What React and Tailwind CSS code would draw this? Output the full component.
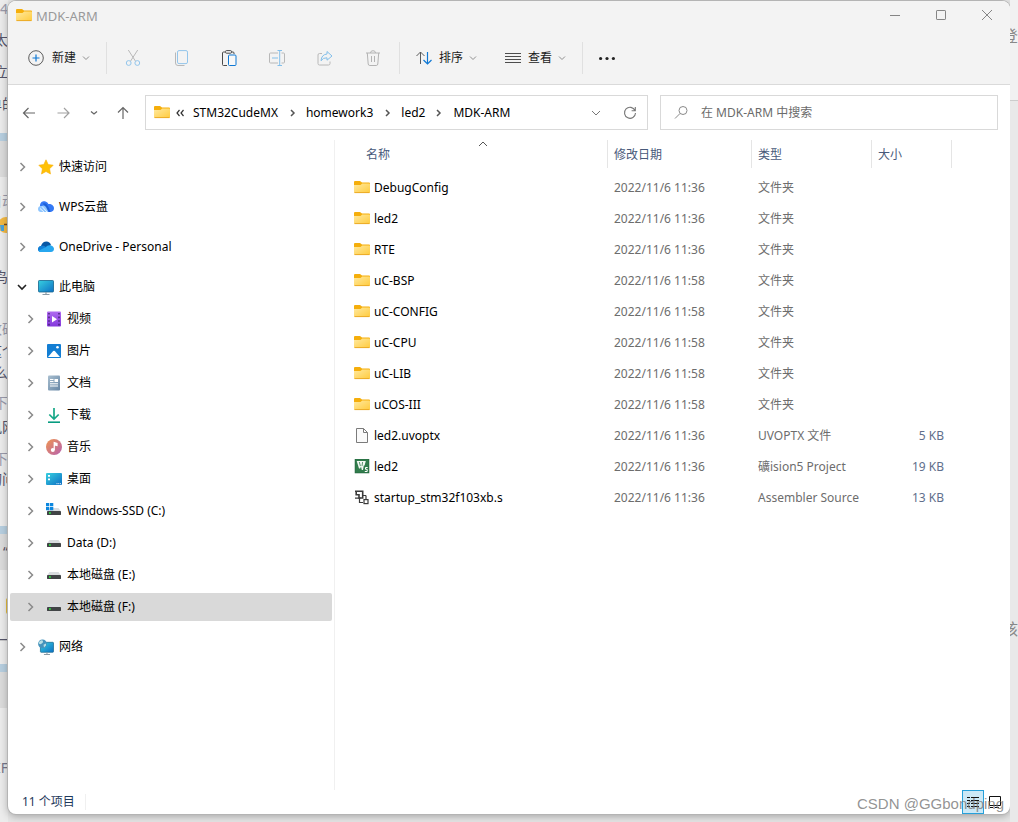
import { useState } from "react";

const places = [
  { name: "快速访问", icon: "star" },
  { name: "WPS云盘", icon: "wps" },
  { name: "OneDrive - Personal", icon: "onedrive" },
  {
    name: "此电脑",
    icon: "pc",
    children: [
      { name: "视频", icon: "video" },
      { name: "图片", icon: "picture" },
      { name: "文档", icon: "document" },
      { name: "下载", icon: "download" },
      { name: "音乐", icon: "music" },
      { name: "桌面", icon: "desktop" },
      { name: "Windows-SSD (C:)", icon: "system" },
      { name: "Data (D:)", icon: "drive" },
      { name: "本地磁盘 (E:)", icon: "drive" },
      { name: "本地磁盘 (F:)", icon: "drive" },
    ],
  },
  { name: "网络", icon: "network" },
];

const files = [
  { name: "DebugConfig", date: "2022/11/6 11:36", type: "文件夹", icon: "folder" },
  { name: "led2", date: "2022/11/6 11:36", type: "文件夹", icon: "folder" },
  { name: "RTE", date: "2022/11/6 11:36", type: "文件夹", icon: "folder" },
  { name: "uC-BSP", date: "2022/11/6 11:58", type: "文件夹", icon: "folder" },
  { name: "uC-CONFIG", date: "2022/11/6 11:58", type: "文件夹", icon: "folder" },
  { name: "uC-CPU", date: "2022/11/6 11:58", type: "文件夹", icon: "folder" },
  { name: "uC-LIB", date: "2022/11/6 11:58", type: "文件夹", icon: "folder" },
  { name: "uCOS-III", date: "2022/11/6 11:58", type: "文件夹", icon: "folder" },
  { name: "led2.uvoptx", date: "2022/11/6 11:36", type: "UVOPTX 文件", size: "5 KB", icon: "file" },
  { name: "led2", date: "2022/11/6 11:36", type: "礦ision5 Project", size: "19 KB", icon: "keil" },
  { name: "startup_stm32f103xb.s", date: "2022/11/6 11:36", type: "Assembler Source", size: "13 KB", icon: "asm" },
];

// Slivers of the web page that show left of the window
const leftPage = [
  { text: "54", style: "h-[18px] text-[#9a9aaa]" },
  { text: "太", style: "h-11" },
  { text: "立", style: "h-5" },
  { text: "单的", style: "-mr-2 h-11" },
  { style: "h-[7px]" },
  { style: "h-2 bg-[#b7cfe0]" },
  { style: "h-9 bg-[#dcdcdc]" },
  { style: "h-3" },
  { text: "自动", style: "-mr-2 h-6 text-[#9a9aaa]" },
  { text: "face", style: "h-6" },
  { style: "h-7" },
  { text: "鸟", style: "h-6" },
  { style: "h-7" },
  { text: "改砸", style: "-mr-2 h-6 text-[#9a9aaa]" },
  { text: "这个", style: "-mr-2 h-5" },
  { text: "么", style: "h-6" },
  { style: "h-2" },
  { text: "下", style: "h-5 text-[#9a9aaa]" },
  { text: "风网", style: "-mr-2 h-7" },
  { style: "h-2" },
  { text: "下", style: "h-5 text-[#9a9aaa]" },
  { text: "询问", style: "-mr-2 h-5" },
  { style: "h-[37px]" },
  { style: "h-2 bg-[#b7cfe0]" },
  { text: "“", style: "h-9 bg-[#dcdcdc]" },
  { style: "h-6" },
  { text: "dot", style: "h-6" },
  { style: "h-2" },
  { text: "一", style: "h-7" },
  { style: "h-2.5" },
  { style: "h-2 bg-[#b7cfe0]" },
  { style: "h-9 bg-[#dcdcdc]" },
  { style: "h-12" },
  { text: "IF", style: "h-6 text-[#77778a]" },
];

function Folder() {
  return (
    <svg className="h-4 w-4 shrink-0" viewBox="0 0 16 16">
      <defs>
        <linearGradient id="folder" x1="0" y1="0" x2="1" y2="1">
          <stop offset="0" stopColor="#ffe9a0" />
          <stop offset="1" stopColor="#ffcb3d" />
        </linearGradient>
      </defs>
      <path d="M0 2Q0 1 1 1H6L8 2.5H15Q16 2.5 16 3.5V7H0Z" fill="#f5ae0b" />
      <path d="M0 5H6.5L8.2 3.5H15.2Q16 3.5 16 4.5V12Q16 13 15 13H1Q0 13 0 12Z" fill="url(#folder)" />
      <path d="M.5 12.6H15.5" stroke="#e9a520" strokeWidth=".9" />
    </svg>
  );
}

function Drive() {
  return (
    <>
      <path d="M3.5 5H12.5L15 8.5H1Z" fill="#d9dcdf" />
      <rect x="1" y="8" width="14" height="4" rx=".4" fill="#414446" />
      <rect x="3" y="9.2" width="1.8" height="1.6" fill="#2bea3c" />
    </>
  );
}

function Monitor() {
  return (
    <>
      <rect x=".5" y="1.5" width="15" height="11.5" rx=".8" fill="url(#screen)" stroke="#14638b" strokeWidth=".8" />
      <path d="M8 13V15.3M4.5 15.5H11.5" stroke="#8a9aa5" strokeWidth="1.2" />
    </>
  );
}

function PlaceIcon({ name }) {
  return (
    <svg className="h-4 w-4 shrink-0" viewBox="0 0 16 16" fill="none">
      <defs>
        <linearGradient id="screen" x1="0" y1="0" x2="1" y2="1">
          <stop offset="0" stopColor="#37d0e0" />
          <stop offset="1" stopColor="#0d6fc4" />
        </linearGradient>
        <linearGradient id="purple" x1="0" y1="0" x2="0" y2="1">
          <stop offset="0" stopColor="#b06cf0" />
          <stop offset="1" stopColor="#8438dc" />
        </linearGradient>
        <linearGradient id="tune" x1="0" y1="0" x2="1" y2="1">
          <stop offset="0" stopColor="#f09550" />
          <stop offset="1" stopColor="#b661b0" />
        </linearGradient>
        <linearGradient id="paper" x1="0" y1="0" x2="1" y2="1">
          <stop offset="0" stopColor="#a9bfd0" />
          <stop offset="1" stopColor="#6585a4" />
        </linearGradient>
      </defs>

      {name === "star" && (
        <path d="M8 .8L10.2 5.5L15.2 6.2L11.6 9.8L12.5 15L8 12.5L3.5 15L4.4 9.8L.8 6.2L5.8 5.5Z" fill="#ffc107" stroke="#f9ae0a" strokeWidth=".6" strokeLinejoin="round" />
      )}

      {name === "wps" && (
        <>
          <path d="M2 7C2 3 5 1.8 7.5 2.4C9 2.8 10 3.8 10.3 5C13.8 4.4 16 7 16 9.3C16 11.8 14.2 13 12 13H8Z" fill="#3479f5" />
          <path d="M5 4.5C8 3.5 9.5 5 12.5 13H9Z" fill="#1c60d8" />
          <path d="M0 10C0 8 1.8 6.8 3.6 7.2C5 5.8 7 6.3 8 8L10.5 13H3C1.2 13 0 11.7 0 10Z" fill="#8ec6ff" />
          <path d="M4 7.4L9 13M2 9.5L6 13" stroke="#fff" strokeWidth=".8" />
        </>
      )}

      {name === "onedrive" && (
        <>
          <path d="M3 7C4 3.8 6 2.5 8.4 2.5C10.7 2.5 12.4 4 13 6L8 10L1 12C-.5 10 .5 7.4 3 7Z" fill="#0758a5" />
          <path d="M3 7C5 6.3 6.5 7 8 8L3 13C0 13 0 10.5 0 10C0 8.5 1.2 7.2 3 7Z" fill="#1180d8" />
          <path d="M8 8C9 6.5 11 5.7 13 6.4C15 7 16 8.3 16 10C16 11.8 14.5 13 13 13H3C1.8 13 1 12.5 .6 11.7Z" fill="#27a7ef" />
        </>
      )}

      {name === "pc" && <Monitor />}

      {name === "video" && (
        <>
          <rect x="1" y=".5" width="14" height="15" rx="1" fill="url(#purple)" />
          <path d="M3 2V15M13 2V15" stroke="#41206d" strokeWidth="1.4" strokeDasharray="1.6 2" />
          <path d="M6 5V11.5L11 8.2Z" fill="#fff" />
        </>
      )}

      {name === "picture" && (
        <>
          <rect x="1" y="1" width="14" height="14" rx="1" fill="#137ed3" />
          <path d="M2 14L7.2 8Q8 7.3 8.8 8L14 14Z" fill="#fff" />
          <circle cx="11.5" cy="4.3" r="1.3" fill="#fff" />
        </>
      )}

      {name === "document" && (
        <>
          <rect x="2" y=".5" width="12" height="15" rx="1" fill="url(#paper)" />
          <path d="M4 4.5H7.5M4 6.5H7.5M4 8.8H12M4 11H12" stroke="#fff" strokeWidth="1" />
          <rect x="8.5" y="4" width="3.5" height="3" fill="#fff" />
        </>
      )}

      {name === "download" && (
        <>
          <path d="M8 1V11.5M3.3 7.5L8 12L12.7 7.5" stroke="#17a888" strokeWidth="1.7" />
          <path d="M2 15.2H14" stroke="#079c80" strokeWidth="1.6" />
        </>
      )}

      {name === "music" && (
        <>
          <circle cx="8" cy="8" r="8" fill="url(#tune)" />
          <circle cx="6.8" cy="11" r="2" fill="#fff" />
          <path d="M8.2 11V3.5L11 4.5V6.4L8.8 5.8" stroke="#fff" strokeWidth="1.2" fill="#fff" />
        </>
      )}

      {name === "desktop" && (
        <>
          <rect x="0" y="2" width="16" height="12" rx="1" fill="url(#screen)" />
          <path d="M2 4.8H4M2 8.3H4" stroke="#fff" strokeWidth="1.7" />
          <path d="M10.5 12.7H15" stroke="#fff" strokeWidth="1" strokeDasharray="1 .8" />
        </>
      )}

      {name === "system" && (
        <>
          <Drive />
          <path d="M0 0H3.3V3.3H0ZM4 0H7.3V3.3H4ZM0 4H3.3V7.3H0ZM4 4H7.3V7.3H4Z" fill="#0c87df" />
        </>
      )}

      {name === "drive" && <Drive />}

      {name === "network" && (
        <>
          <g transform="translate(2 2) scale(.87)">
            <Monitor />
          </g>
          <circle cx="4.5" cy="4.8" r="4.4" fill="#4593bc" />
          <path d="M1.5 2.5Q4 .5 5 2Q5.5 4 3 5Q1 5.5 .6 4ZM5.5 5.8L8 4.5V6.5L6 8.5Z" fill="#b9dfe5" />
        </>
      )}
    </svg>
  );
}

function FileIcon({ name }) {
  if (name === "folder") {
    return <Folder />;
  }

  return (
    <svg className="h-4 w-4 shrink-0" viewBox="0 0 16 16" fill="none">
      {name === "file" && (
        <path d="M2.5 .5H9.5L13.5 4.5V14.5H2.5ZM9.5 .5V4.5H13.5" fill="#fafafa" stroke="#7b7b7b" strokeWidth="1" />
      )}

      {name === "keil" && (
        <>
          <rect x="1" y="0" width="14" height="14" fill="#317c4c" stroke="#1d5d36" strokeWidth=".5" />
          <path d="M2.7 2H11.8L10.6 6.5H9.8L9 11H7.8L7 7.5L6.2 9.5H5Z" fill="#f4f8f4" />
          <path d="M5.3 3L6.4 7M8.6 3L8 7" stroke="#317c4c" strokeWidth=".8" />
          <path d="M13.7 8.5H11.5V10.3H13.2V12.5H10.8" stroke="#fff" strokeWidth="1" />
        </>
      )}

      {name === "asm" && (
        <>
          <path d="M1 1.2H8.7V4.5M2.2 1.2V4.8H5V8H8.7V4" stroke="#3a3a3a" strokeWidth="1.6" />
          <path d="M1 8.2H6.5M5.5 8V12.5H9M12 5.5V9M9 5.5H12" stroke="#3a3a3a" strokeWidth="1.2" />
          <rect x="10" y="9.6" width="4" height="4" stroke="#3a3a3a" strokeWidth="1.2" />
        </>
      )}
    </svg>
  );
}

function Chevron({ className, d = "M5 6.5L8 9.5L11 6.5", width = 1 }) {
  return (
    <svg className={`h-4 w-4 shrink-0 ${className}`} viewBox="0 0 16 16" fill="none" stroke="currentColor" strokeWidth={width}>
      <path d={d} />
    </svg>
  );
}

function ToolButton({ label, children }) {
  return (
    <button aria-label={label} className="flex h-8 w-12 items-center justify-center">
      <svg className="h-4 w-4" viewBox="0 0 16 16" fill="none" strokeWidth="1">
        {children}
      </svg>
    </button>
  );
}

function Place({ place, child, open, selected, onSelect }) {
  return (
    <button
      onClick={onSelect}
      className={`flex h-7 w-full items-center rounded-xs text-left ${child ? "pl-3" : "pl-1"} ${selected ? "bg-[#d9d9d9]" : ""}`}
    >
      {open ? (
        <Chevron className="text-[#222]" d="M4 6L8 10L12 6" width={1.6} />
      ) : (
        <Chevron className="text-[#8a8a8a]" d="M6.5 4L10.5 8L6.5 12" width={1.5} />
      )}

      <span className="ml-2 flex items-center gap-[5px]">
        <PlaceIcon name={place.icon} />
        {place.name}
      </span>
    </button>
  );
}

export default function App() {
  const [selected, setSelected] = useState("本地磁盘 (F:)");
  const [search, setSearch] = useState("");

  return (
    <div className="relative flex min-h-screen overflow-hidden bg-[#e6e6e6] font-['Noto_Sans','Noto_Sans_CJK_SC',sans-serif] text-xs text-black">

      {/* Page behind, left */}

      <div className="w-2 shrink-0 overflow-hidden bg-[#ececec] text-sm text-[#55556a]" aria-hidden="true">
        {leftPage.map((line, i) => (
          <div key={i} className={`flex items-center justify-end whitespace-nowrap ${line.style}`}>
            {line.text === "face" && (
              <svg className="h-4 w-4 shrink-0" viewBox="0 0 16 16">
                <circle cx="14" cy="8" r="8" fill="#f3b944" />
                <path d="M8 8H12V14H9Z" fill="#4aa3dc" />
                <path d="M12 7.5H16" stroke="#7b4a16" strokeWidth="1.5" />
              </svg>
            )}
            {line.text === "dot" && <span className="h-4 w-0.5 rounded-l-full bg-[#e6bd3c]"></span>}
            {line.text !== "face" && line.text !== "dot" && line.text}
          </div>
        ))}
      </div>

      {/* Window */}

      <div className="mt-px mb-2 flex min-w-0 flex-1 flex-col overflow-hidden rounded-lg bg-white shadow-[0_0_0_1px_#b4b4b4,0_2px_8px_#00000050]">

        {/* Title bar */}

        <header className="border-b border-[#dadada] bg-[#f3f3f3]">
          <div className="flex h-[30px] items-center justify-between pl-2">
            <div className="flex items-center gap-1 text-[#9a9a9a]">
              <Folder />
              <h1 className="text-[13px] leading-4">MDK-ARM</h1>
            </div>

            <div className="flex self-start text-[#858585]">
              <button aria-label="最小化" className="flex h-7 w-[46px] items-center justify-center">
                <svg className="h-2.5 w-2.5" viewBox="0 0 10 10" stroke="currentColor"><path d="M0 5.5H10" /></svg>
              </button>
              <button aria-label="最大化" className="flex h-7 w-[46px] items-center justify-center">
                <svg className="h-2.5 w-2.5" viewBox="0 0 10 10" fill="none" stroke="currentColor"><rect x=".5" y=".5" width="9" height="9" rx=".6" /></svg>
              </button>
              <button aria-label="关闭" className="flex h-7 w-[46px] items-center justify-center">
                <svg className="h-2.5 w-2.5" viewBox="0 0 10 10" stroke="currentColor"><path d="M0 0L10 10M10 0L0 10" /></svg>
              </button>
            </div>
          </div>

          {/* Toolbar */}

          <div className="flex h-[53px] items-center pl-5 text-[#1a1a1a]">
            <button className="flex items-center">
              <svg className="mr-2 h-4 w-4" viewBox="0 0 16 16" fill="none">
                <circle cx="8" cy="8" r="7.3" stroke="#5c5c5c" />
                <path d="M8 4.5V11.5M4.5 8H11.5" stroke="#0f78d4" strokeWidth="1.2" />
              </svg>
              新建
              <Chevron className="ml-0.5 text-[#8f8f8f]" />
            </button>

            <div className="mr-0.5 ml-3 h-8 w-px bg-[#e0e0e0]"></div>

            <ToolButton label="剪切">
              <path d="M3.3 0L10.5 11.2M12.7 0L5.5 11.2" stroke="#b8b8b8" />
              <circle cx="3.7" cy="13" r="2.4" stroke="#93c5eb" />
              <circle cx="12.3" cy="13" r="2.4" stroke="#93c5eb" />
            </ToolButton>
            <ToolButton label="复制">
              <rect x="4.5" y=".6" width="10" height="13" rx="1.5" stroke="#93c5eb" />
              <path d="M2.5 2.5V13Q2.5 15.5 5 15.5H11.5" stroke="#b8b8b8" />
            </ToolButton>
            <ToolButton label="粘贴">
              <path d="M4 2H2.5Q1.5 2 1.5 3V14.5Q1.5 15.5 2.5 15.5H6M10.5 2H12Q13 2 13 3V4" stroke="#4a4a4a" />
              <rect x="4.5" y=".6" width="6" height="2.6" rx="1" stroke="#4a4a4a" />
              <rect x="7.5" y="5" width="7.5" height="10.5" rx="1" fill="#f8f8f8" stroke="#0f78d4" />
            </ToolButton>
            <ToolButton label="重命名">
              <path d="M9 3H1.5Q.5 3 .5 4V12Q.5 13 1.5 13H9M12.5 3H14.5Q15.5 3 15.5 4V12Q15.5 13 14.5 13H12.5" stroke="#b8b8b8" />
              <path d="M10.7 .5V15.5M8.5 .5H13M8.5 15.5H13M3 8H9" stroke="#83bfea" />
            </ToolButton>
            <ToolButton label="共享">
              <path d="M5 3.5H2.5Q1 3.5 1 5V13.5Q1 15 2.5 15H11.5Q13 15 13 13.5V11.5" stroke="#b8b8b8" />
              <path d="M10 1.5L15 6L10 10.2V7.8Q6 7.5 4 10.8Q4.5 4.5 10 4Z" stroke="#83bfea" />
            </ToolButton>
            <ToolButton label="删除">
              <path d="M1 3H15M5.5 3Q5.5 .7 8 .7T10.5 3M2.3 3L3.2 14Q3.4 15.5 4.8 15.5H11.2Q12.6 15.5 12.8 14L13.7 3M6.5 6V12M9.5 6V12" stroke="#b3b3b3" />
            </ToolButton>

            <div className="ml-0.5 h-8 w-px bg-[#e0e0e0]"></div>

            <button className="ml-4 flex items-center">
              <svg className="mr-[7px] h-4 w-4" viewBox="0 0 16 16" fill="none">
                <path d="M4.5 14V2M.5 6L4.5 2L8.5 6" stroke="#5a5a5a" />
                <path d="M11.5 2V14M7.5 10L11.5 14L15.5 10" stroke="#0f78d4" strokeWidth="1.2" />
              </svg>
              排序
              <Chevron className="ml-0.5 text-[#8f8f8f]" />
            </button>

            <button className="ml-6 flex items-center">
              <svg className="mr-[7px] h-4 w-4" viewBox="0 0 16 16" stroke="#4d4d4d">
                <path d="M0 3.5H16M0 6.5H16M0 9.5H16M0 12.5H16" />
              </svg>
              查看
              <Chevron className="ml-0.5 text-[#8f8f8f]" />
            </button>

            <div className="ml-3 h-8 w-px bg-[#e0e0e0]"></div>

            <ToolButton label="查看更多">
              <circle cx="1.6" cy="8.5" r="1.6" fill="#222" />
              <circle cx="8" cy="8.5" r="1.6" fill="#222" />
              <circle cx="14.4" cy="8.5" r="1.6" fill="#222" />
            </ToolButton>
          </div>
        </header>

        {/* Address bar */}

        <div className="flex h-[55px] shrink-0 items-center pr-3 pl-[13px] text-[#555]">
          <button aria-label="后退">
            <Chevron d="M14 8H2.5M7.5 3L2.5 8L7.5 13" className="text-[#666]" width={1.2} />
          </button>
          <button aria-label="前进" className="ml-[18px]">
            <Chevron d="M2.5 8H14M9 3L14 8L9 13" className="text-[#a0a0a0]" width={1.2} />
          </button>
          <button aria-label="最近浏览的位置" className="ml-[15px]">
            <Chevron className="text-[#666]" d="M5 6.5L8 9L11 6.5" width={1.3} />
          </button>
          <button aria-label="上移" className="ml-[13px]">
            <Chevron d="M8 14V2.5M3 7.5L8 2.5L13 7.5" className="text-[#666]" width={1.2} />
          </button>

          <nav className="ml-3.5 flex h-[35px] w-[503px] items-center border border-[#d9d9d9] pl-2 text-black">
            <Folder />
            <svg className="mx-1.5 h-2 w-2" viewBox="0 0 8 8" fill="none" stroke="#333" strokeWidth="1.2">
              <path d="M3.5 1L1 4L3.5 7M7.5 1L5 4L7.5 7" />
            </svg>
            <a href="#stm" className="ml-[3px]">STM32CudeMX</a>
            <Chevron className="mx-1.5 text-[#555]" d="M7 5L10 8L7 11" width={1.5} />
            <a href="#homework3">homework3</a>
            <Chevron className="mx-1.5 text-[#555]" d="M7 5L10 8L7 11" width={1.5} />
            <a href="#led2">led2</a>
            <Chevron className="mx-1.5 text-[#555]" d="M6 5L9 8L6 11" width={1.5} />
            <a href="#mdk">MDK-ARM</a>

            <button aria-label="以前的位置" className="ml-auto">
              <Chevron className="text-[#777]" d="M4 6L8 10L12 6" />
            </button>
            <button aria-label="刷新" className="mr-[9px] ml-[18px]">
              <Chevron className="text-[#777]" d="M13 5.5A5.5 5.5 0 1 0 13.5 8M13.3 2V5.7H9.6" width={1.1} />
            </button>
          </nav>

          <label className="ml-3 flex h-[35px] min-w-0 flex-1 items-center border border-[#d9d9d9] pl-[13px]">
            <span className="sr-only">搜索</span>
            <svg className="mr-[11px] h-4 w-4 shrink-0" viewBox="0 0 16 16" fill="none" stroke="#8a8a8a">
              <circle cx="9" cy="5.5" r="4" />
              <path d="M6 8.5L1 13.5" />
            </svg>
            <input
              value={search}
              onChange={(e) => setSearch(e.target.value)}
              placeholder="在 MDK-ARM 中搜索"
              className="min-w-0 flex-1 outline-none placeholder:text-[#6b6b6b]"
            />
          </label>
        </div>

        <div className="flex min-h-0 flex-1">

          {/* Navigation pane */}

          <nav className="flex w-[327px] shrink-0 flex-col gap-3 border-r border-[#f0f0f0] pt-[13px] pr-0.5 pl-0.5">
            {places.map((place) => (
              <div key={place.name} className="flex flex-col gap-1">
                <Place
                  place={place}
                  open={Boolean(place.children)}
                  selected={selected === place.name}
                  onSelect={() => setSelected(place.name)}
                />

                {place.children?.map((child) => (
                  <Place
                    key={child.name}
                    place={child}
                    child
                    selected={selected === child.name}
                    onSelect={() => setSelected(child.name)}
                  />
                ))}
              </div>
            ))}
          </nav>

          {/* File list */}

          <main className="min-w-0 flex-1">
            <table className="w-full table-fixed border-separate border-spacing-0 text-left whitespace-nowrap text-[#6d6d6d]">
              <colgroup>
                <col className="w-[273px]" />
                <col className="w-36" />
                <col className="w-[120px]" />
                <col className="w-20" />
                <col />
              </colgroup>

              <thead className="text-[#48597a]">
                <tr className="h-7">
                  <th className="relative border-r border-[#e5e5e5] pt-0.5 pl-[31px] font-normal">
                    名称
                    <Chevron className="absolute -top-1 left-[140px] text-[#555]" d="M4 10L8 6L12 10" />
                  </th>
                  <th className="border-r border-[#e5e5e5] pt-0.5 pl-1.5 font-normal">修改日期</th>
                  <th className="border-r border-[#e5e5e5] pt-0.5 pl-1.5 font-normal">类型</th>
                  <th className="border-r border-[#e5e5e5] pt-0.5 pl-1.5 font-normal">大小</th>
                  <td></td>
                </tr>
              </thead>

              <tbody>
                <tr className="h-1" aria-hidden="true"></tr>
                {files.map((file, i) => (
                  <tr key={i} className="h-[31px]">
                    <td className="pl-[19px] text-black">
                      <div className="flex items-center gap-1">
                        <FileIcon name={file.icon} />
                        {file.name}
                      </div>
                    </td>
                    <td className="pl-1.5">{file.date}</td>
                    <td className="pl-1.5">{file.type}</td>
                    <td className="pr-2 text-right text-[#5f6f8c]">{file.size}</td>
                    <td></td>
                  </tr>
                ))}
              </tbody>
            </table>
          </main>

        </div>

        {/* Status bar */}

        <footer className="flex h-6 shrink-0 items-center justify-between pr-1 pl-3.5 text-[#1e395b]">
          <p className="border-r border-[#f0f0f0] pr-2.5">11 个项目</p>

          <div className="flex">
            <button aria-label="详细信息" className="flex h-6 w-[22px] items-center justify-center border border-[#26a0da] bg-[#cbe8f6]">
              <svg className="h-3 w-3" viewBox="0 0 12 12" stroke="#111">
                <path d="M0 1.5H3M4 1.5H12M0 4.5H3M4 4.5H12M0 7.5H3M4 7.5H12M0 10.5H3M4 10.5H12" />
              </svg>
            </button>
            <button aria-label="大图标" className="flex h-6 w-[22px] items-center justify-center">
              <svg className="h-3 w-3" viewBox="0 0 12 12" fill="none" stroke="#111">
                <path d="M.5 .5H11.5V9.5H.5ZM1 11.5H4M6 11.5H10" />
              </svg>
            </button>
          </div>
        </footer>

      </div>

      {/* Page behind, right */}

      <div className="w-2 shrink-0 overflow-hidden bg-[#f1f1f1] text-base leading-7 text-[#888]" aria-hidden="true">
        <div className="h-[101px] border-b border-[#ccc] pt-[22px]">
          <p className="-ml-2">登</p>
        </div>
        <div className="h-[721px] bg-[#e9e9e9] pt-[514px]">
          <p className="-ml-2">核</p>
        </div>
      </div>

      <p className="absolute right-3.5 bottom-1.5 font-['Liberation_Sans',sans-serif] text-[15px] leading-6 text-[#777]/80">
        CSDN @GGbondping
      </p>

    </div>
  );
}
